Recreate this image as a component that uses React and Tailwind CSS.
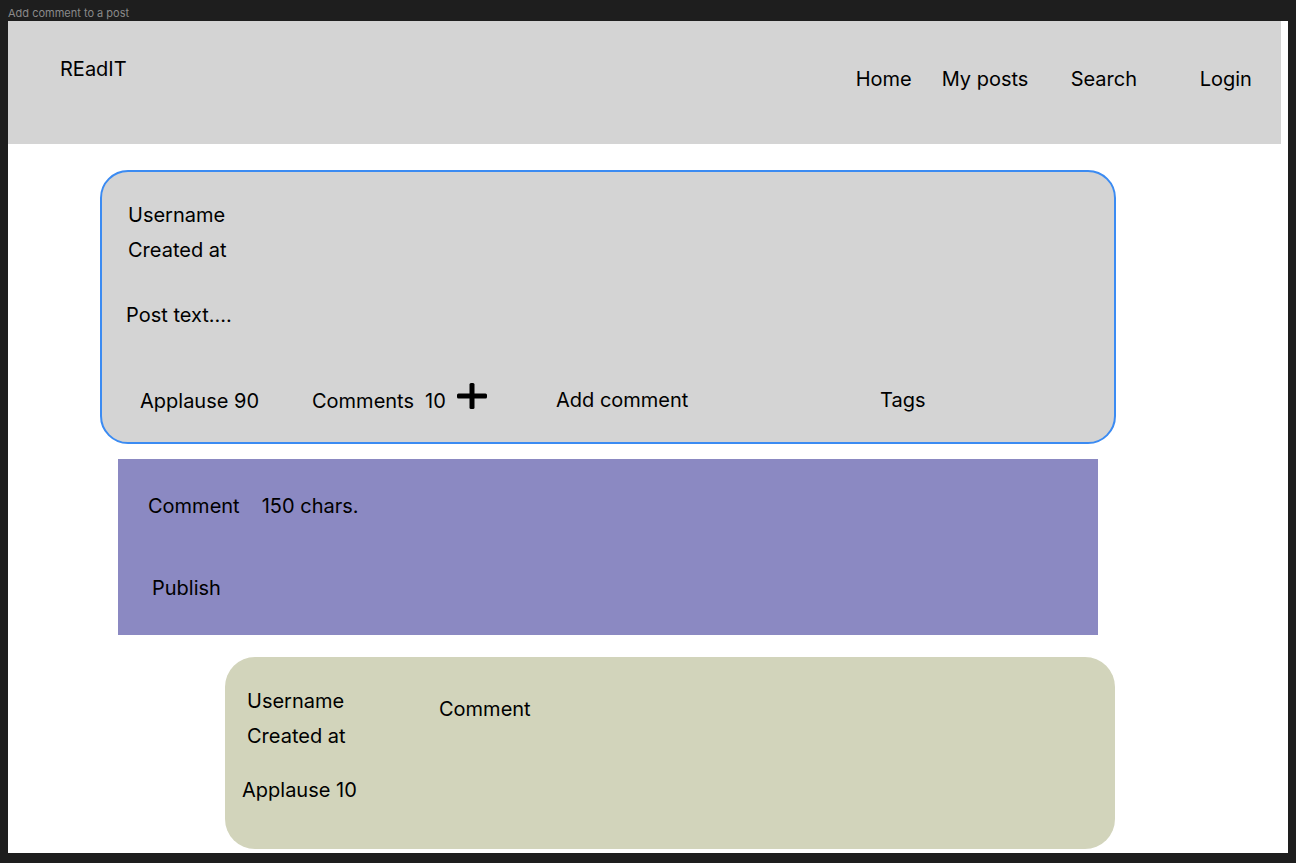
import React from "react";

function PlusIcon() {
  return (
    <svg width="30" height="26" viewBox="0 0 30 26" className="ml-[11px] -mt-[11px]">
      <rect x="0" y="10.5" width="30" height="5" rx="1.5" fill="#000" />
      <rect x="12.5" y="0" width="5" height="26" rx="1.5" fill="#000" />
    </svg>
  );
}

function Header() {
  return (
    <header className="flex h-[123px] w-[1273px] items-start bg-[#d4d4d4]">
      <div className="ml-[52px] mt-[36px]">REadIT</div>
      <nav className="ml-[729px] mt-[46px] flex">
        <span className="w-[86px]">Home</span>
        <span className="w-[129px]">My posts</span>
        <span className="w-[129px]">Search</span>
        <span>Login</span>
      </nav>
    </header>
  );
}

function PostCard() {
  return (
    <article className="ml-[92px] mt-[26px] h-[274px] w-[1016px] rounded-[28px] border-2 border-[#3b8bf2] bg-[#d4d4d4] pt-[31px]">
      <div className="pl-[26px]">Username</div>
      <div className="mt-[11px] pl-[26px]">Created at</div>
      <div className="mt-[41px] pl-[24px]">Post text....</div>
      <div className="mt-[62px] flex items-center pl-[38px]">
        <span className="w-[172px]">Applause 90</span>
        <div className="flex w-[244px] items-center">
          <span>Comments</span>
          <span className="ml-[11px]">10</span>
          <PlusIcon />
        </div>
        <span className="-mt-[3px] w-[324px]">Add comment</span>
        <span className="-mt-[3px]">Tags</span>
      </div>
    </article>
  );
}

function CommentForm() {
  return (
    <section className="ml-[110px] mt-[15px] h-[176px] w-[980px] bg-[#8b89c2] pt-[35px]">
      <div className="flex pl-[30px]">
        <span>Comment</span>
        <span className="ml-[22px]">150 chars.</span>
      </div>
      <div className="mt-[58px] pl-[34px]">Publish</div>
    </section>
  );
}

function CommentCard() {
  return (
    <article className="ml-[217px] mt-[22px] h-[192px] w-[890px] rounded-[30px] bg-[#d2d4bb] pt-[32px]">
      <div className="flex pl-[22px]">
        <div className="w-[192px]">
          <div>Username</div>
          <div className="mt-[11px]">Created at</div>
        </div>
        <div className="mt-[8px]">Comment</div>
      </div>
      <div className="mt-[30px] pl-[17px]">Applause 10</div>
    </article>
  );
}

export default function App() {
  return (
    <div className="min-h-screen bg-[#1e1e1e] pl-[8px] text-[20px] leading-[24px] text-black [font-family:Inter,'Noto_Sans',sans-serif]">
      <div className="h-[21px] pt-[6px] text-[11px] leading-[14px] text-[#8a8a8a]">
        Add comment to a post
      </div>
      <main className="h-[832px] w-[1280px] overflow-hidden bg-white">
        <Header />
        <PostCard />
        <CommentForm />
        <CommentCard />
      </main>
    </div>
  );
}
